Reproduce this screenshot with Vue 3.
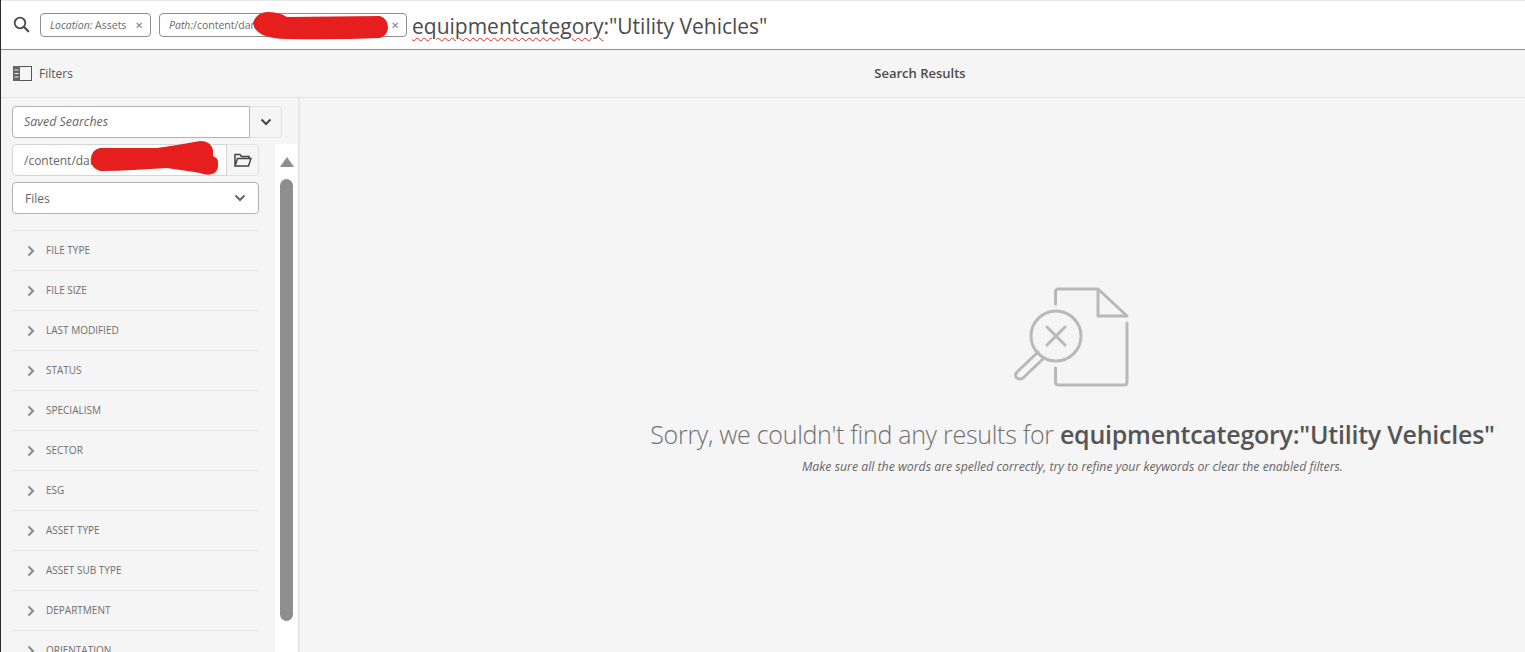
<script setup>
const facets = ['FILE TYPE','FILE SIZE','LAST MODIFIED','STATUS','SPECIALISM','SECTOR','ESG','ASSET TYPE','ASSET SUB TYPE','DEPARTMENT','ORIENTATION']
</script>

<template>
  <div class="page">
    <header class="search">
      <svg class="mag" width="18" height="18" viewBox="0 0 18 18"><circle cx="7" cy="7" r="5.300" fill="none" stroke="#4b4b4b" stroke-width="1.800"/><path d="M10.800 10.800L15.300 15.300" stroke="#4b4b4b" stroke-width="2.200" stroke-linecap="round"/></svg>
      <div class="chip chip-loc"><span><i>Location:</i> Assets</span><span class="x">✕</span></div>
      <div class="chip chip-path"><span><i>Path:</i>/content/dam</span><span class="x">✕</span></div>
      <div class="query"><span class="typo">equipmentcategory</span>:"Utility Vehicles"</div>
    </header>
    <div class="toolbar">
      <div class="filters">
        <svg width="19" height="15" viewBox="0 0 19 15"><rect x=".5" y=".5" width="18" height="14" fill="none" stroke="#555"/><rect x="0" y="0" width="7" height="15" fill="#666"/><path d="M1.500 4h4M1.500 7.500h4M1.500 11h4" stroke="#eee"/></svg>
        <span>Filters</span>
      </div>
      <div class="title">Search Results</div>
    </div>
    <div class="body">
      <aside class="side">
        <div class="saved">
          <div class="field saved-input"><i>Saved Searches</i></div>
          <div class="addon saved-btn"><svg width="12" height="8" viewBox="0 0 12 8"><path d="M1.500 1.500L6 6l4.500-4.500" fill="none" stroke="#444" stroke-width="2"/></svg></div>
        </div>
        <div class="lower">
          <div class="col">
            <div class="path">
              <div class="field path-input">/content/dam</div>
              <div class="addon path-btn">
                <svg width="18" height="14" viewBox="0 0 18 14"><path d="M1 13V1.500h5l1.500 2H15v2M1 13L3.500 5.500H17L14.500 13z" fill="none" stroke="#444" stroke-width="1.500"/></svg>
              </div>
            </div>
            <div class="field select"><span>Files</span><svg width="12" height="8" viewBox="0 0 12 8"><path d="M1.500 1.500L6 6l4.500-4.500" fill="none" stroke="#666" stroke-width="2"/></svg></div>
            <ul class="facets">
              <li v-for="f in facets" :key="f">
                <svg width="8" height="12" viewBox="0 0 8 12"><path d="M1.500 1.500L6 6l-4.500 4.500" fill="none" stroke="#8a8a8a" stroke-width="2"/></svg>
                <span class="label">{{ f }}</span>
              </li>
            </ul>
          </div>
          <div class="track">
            <div class="up"></div>
            <div class="thumb"></div>
          </div>
        </div>
      </aside>
      <main class="main">
        <svg class="nores" width="125" height="105" viewBox="1010 285 125 105" fill="none" stroke="#b9b9b9" stroke-width="3" stroke-linejoin="round" stroke-linecap="round">
          <path d="M1055.500 304V292q0-3 3-3h39.500l29 27h-29v-27"/>
          <path d="M1127 323v59q0 3-3 3h-65.500q-3 0-3-3v-14"/>
          <circle cx="1056" cy="336" r="25"/>
          <path d="M1047 327l18 18M1065 327l-18 18"/>
          <path d="M1038 352l-21 20q-3 4 0 6t6 0l21-20"/>
        </svg>
        <h1><span class="light">Sorry, we couldn't find any results for </span><b>equipmentcategory:"Utility Vehicles"</b></h1>
        <p>Make sure all the words are spelled correctly, try to refine your keywords or clear the enabled filters.</p>
      </main>
    </div>
    <svg class="scribble" width="1525" height="652" viewBox="0 0 1525 652" fill="#e61e1e">
      <path d="M253 23q3-10 14-11 12 0 20 5l93-1q8 3 8 11t-8 11q-46 2-93 1-14 0-24-4-9-4-10-12z"/>
      <path d="M91 160q0-10 9-12l57 0q22-3 43-7 11 0 13 9v6q5 2 5 6 1 10-6 12-5 2-12-1-6-1-33-5-16 1-34 2-15 1-33 1-9-3-9-11z"/>
    </svg>
  </div>
</template>

<style>
html, body { margin: 0; background: #f5f5f5; }
</style>

<style scoped>
.page { position: relative; width: 1525px; height: 652px; overflow: hidden; background: #f5f5f5; color: #4b4b4b; font-family: "Open Sans", "Noto Sans", sans-serif; box-sizing: border-box; border-left: 1px solid #262b30; }
.search { height: 50px; box-sizing: border-box; background: #fff; border-top: 1px solid #e8e8e8; border-bottom: 1px solid #8f8f8f; display: flex; align-items: center; padding-left: 12px; }
.mag { margin-right: 9px; }
.chip { height: 24px; box-sizing: border-box; border: 1px solid #8e8e8e; border-radius: 4px; display: flex; align-items: center; justify-content: space-between; padding: 0 7px 0 9px; font-size: 10.500px; color: #6a6a6a; background: #fff; margin-right: 8px; }
.chip-loc { width: 111px; }
.chip-path { width: 248px; margin-right: 5px; }
.x { font-size: 10px; color: #808080; }
.query { font-size: 21px; color: #4b4b4b; white-space: nowrap; margin-top: 1px; }
.typo { text-decoration: underline wavy #e0281e 1px; text-underline-offset: 3px; }
.toolbar { height: 48px; box-sizing: border-box; border-bottom: 1px solid #e1e1e1; display: flex; align-items: center; }
.filters { width: 314px; box-sizing: border-box; padding-left: 12px; display: flex; align-items: center; gap: 7px; font-size: 12px; color: #555; }
.title { flex: 1; text-align: center; font-size: 13px; font-weight: 600; color: #4b4b4b; padding-bottom: 1px; }
.body { flex: 1; display: flex; height: 554px; }
.side { width: 299px; box-sizing: border-box; flex: none; border-right: 2px solid #e6e6e6; padding: 8px 0 0 11px; overflow: hidden; }
.saved { display: flex; width: 270px; }
.field { box-sizing: border-box; height: 32px; background: #fff; border: 1px solid #b3b3b3; border-radius: 4px; font-size: 12px; color: #666; display: flex; align-items: center; }
.addon { box-sizing: border-box; height: 32px; width: 32px; border: 1px solid #e1e1e1; border-left: 0; border-radius: 0 4px 4px 0; display: flex; align-items: center; justify-content: center; }
.saved-input { width: 238px; padding: 0 0 2px 11px; border-radius: 4px 0 0 4px; font-size: 12.400px; }
.saved-btn { border-left: 0; }
.lower { display: flex; margin-top: 6px; }
.col { width: 247px; flex: none; }
.path { display: flex; }
.path-input { width: 215px; padding-left: 11px; border-color: #d5d5d5; border-radius: 4px 0 0 4px; }
.select { margin-top: 6px; justify-content: space-between; padding: 0 12px; }
.facets { list-style: none; margin: 16px 0 0; padding: 0; }
.facets li { height: 40px; box-sizing: border-box; border-top: 1px solid #e1e1e1; display: flex; align-items: center; padding-left: 15px; gap: 11px; font-size: 10px; color: #6e6e6e; }
.label { margin-top: -2px; }
.track { width: 22px; margin-left: 16px; flex: none; height: 510px; background: #fff; padding-left: 5px; box-sizing: border-box; }
.up { width: 0; height: 0; margin: 13px 0 0; border-left: 7px solid transparent; border-right: 7px solid transparent; border-bottom: 10px solid #8e8e8e; }
.thumb { width: 13px; height: 442px; margin-top: 12px; border-radius: 7px; background: #8e8e8e; }
.main { flex: 1; box-sizing: border-box; padding: 187px 0 0 320px; display: flex; flex-direction: column; align-items: center; }
.nores { flex: none; }
h1 { margin: 27px 0 0; font-size: 25px; line-height: 34px; font-weight: 400; white-space: nowrap; color: #5c5c5c; }
.light { font-weight: 300; color: #707070; letter-spacing: -0.290px; }
h1 b { font-weight: 600; color: #555; letter-spacing: -0.240px; }
p { margin: 7px 0 0; font-size: 12.300px; font-style: italic; color: #666; }
.scribble { position: absolute; left: -1px; top: 0; pointer-events: none; }
</style>
